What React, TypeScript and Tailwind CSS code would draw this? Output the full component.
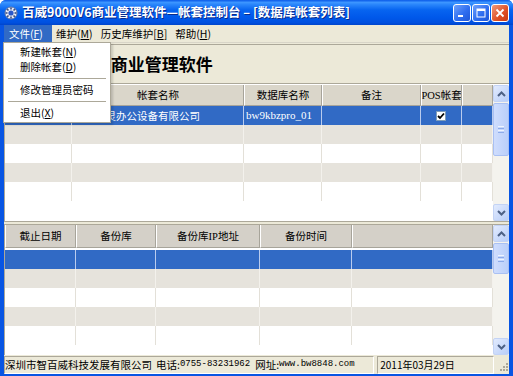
import React from "react";

const CJK = "font-['Noto_Sans_CJK_SC',sans-serif]";

function Chevron({ up }: { up?: boolean }) {
  return (
    <svg width="9" height="6" viewBox="0 0 9 6">
      <path d={up ? "M1 5 L4.5 1.5 L8 5" : "M1 1 L4.5 4.5 L8 1"} stroke="#4D6185" strokeWidth="2" fill="none" />
    </svg>
  );
}

function SBtn({ up }: { up?: boolean }) {
  return (
    <div className="h-[17px] flex items-center justify-center rounded-[2px] border border-[#C3D3F5] bg-[linear-gradient(135deg,#E2EBFE,#B9CEF8)]">
      <Chevron up={up} />
    </div>
  );
}

function Scrollbar({ thumb }: { thumb: string }) {
  return (
    <div className="w-[16px] flex flex-col bg-[#F4F3EE]">
      <SBtn up />
      <div className={`mt-[1px] ${thumb} rounded-[2px] border border-[#A9C0F3] bg-[linear-gradient(90deg,#CFDDFD,#BACFFA)] flex flex-col items-center justify-center gap-[1px]`}>
        <div className="w-[6px] h-[1px] bg-[#EEF4FE]" />
        <div className="w-[6px] h-[1px] bg-[#8CABEA]" />
        <div className="w-[6px] h-[1px] bg-[#EEF4FE]" />
        <div className="w-[6px] h-[1px] bg-[#8CABEA]" />
      </div>
      <div className="flex-1" />
      <SBtn />
    </div>
  );
}

function Check() {
  return (
    <div className="w-[10px] h-[10px] bg-white border border-[#7F9DB9] flex items-center justify-center">
      <svg width="8" height="8" viewBox="0 0 8 8">
        <path d="M1 4 L3 6 L7 1.5" stroke="#000" strokeWidth="1.8" fill="none" />
      </svg>
    </div>
  );
}

type Kind = "sel" | "gray" | "white";

function Row({ kind, widths, cells }: { kind: Kind; widths: string[]; cells?: React.ReactNode[] }) {
  const bg = kind === "sel" ? "bg-[#316AC5] text-white" : kind === "gray" ? "bg-[#E6E3DC]" : "bg-white";
  const line = kind === "sel" ? "border-[#B9CBEE]" : kind === "gray" ? "border-[#F3F1EC]" : "border-[#E3E0D8]";
  return (
    <div className={`flex h-[19px] shrink-0 ${bg}`}>
      {widths.map((w, i) => (
        <div key={i} className={`${w} h-full border-r ${line} flex items-center px-[2px] overflow-hidden whitespace-nowrap`}>
          {cells ? cells[i] : null}
        </div>
      ))}
    </div>
  );
}

function Header({ widths, labels, h, bg }: { widths: string[]; labels: React.ReactNode[]; h: string; bg: string }) {
  return (
    <div className={`flex ${h} shrink-0 ${bg}`}>
      {widths.map((w, i) => (
        <div
          key={i}
          className={`${w} h-full border-l border-l-white border-r border-r-[#A7A49A] border-b border-b-[#A7A49A] flex items-center justify-center whitespace-nowrap overflow-hidden`}
        >
          {labels[i]}
        </div>
      ))}
    </div>
  );
}

function U({ c }: { c: string }) {
  return <span className="underline underline-offset-1">{c}</span>;
}

function WinIcon() {
  return (
    <svg width="14" height="14" viewBox="0 0 14 14">
      <circle cx="7" cy="7" r="6" fill="#E8ECF6" stroke="#6C7FA8" strokeWidth="1" />
      <g stroke="#3A4F86" strokeWidth="1.6">
        <line x1="7" y1="1.5" x2="7" y2="3.5" />
        <line x1="7" y1="10.5" x2="7" y2="12.5" />
        <line x1="1.5" y1="7" x2="3.5" y2="7" />
        <line x1="10.5" y1="7" x2="12.5" y2="7" />
        <line x1="3.1" y1="3.1" x2="4.5" y2="4.5" />
        <line x1="9.5" y1="9.5" x2="10.9" y2="10.9" />
        <line x1="10.9" y1="3.1" x2="9.5" y2="4.5" />
        <line x1="3.1" y1="10.9" x2="4.5" y2="9.5" />
      </g>
      <circle cx="7" cy="7" r="2.6" fill="#2B58C8" />
    </svg>
  );
}

function TitleBtn({ kind }: { kind: "min" | "max" | "close" }) {
  const bg =
    kind === "close"
      ? "bg-[linear-gradient(135deg,#F09A7C,#DE4F24_60%,#C83A12)]"
      : "bg-[linear-gradient(135deg,#6FA1FB,#2F6EF0_55%,#1E56D8)]";
  return (
    <div className={`w-[18px] h-[18px] rounded-[3px] border border-white ${bg} flex items-center justify-center`}>
      {kind === "min" && (
        <svg width="12" height="12" viewBox="0 0 12 12">
          <rect x="2" y="8" width="5" height="2" fill="white" />
        </svg>
      )}
      {kind === "max" && (
        <svg width="12" height="12" viewBox="0 0 12 12">
          <rect x="2" y="2" width="8" height="8" fill="none" stroke="white" strokeWidth="1" />
          <rect x="2" y="2" width="8" height="2" fill="white" />
        </svg>
      )}
      {kind === "close" && (
        <svg width="12" height="12" viewBox="0 0 12 12">
          <path d="M2.5 2.5 L9.5 9.5 M9.5 2.5 L2.5 9.5" stroke="white" strokeWidth="1.8" />
        </svg>
      )}
    </div>
  );
}

export default function App() {
  const w1 = ["w-[67px]", "w-[172px]", "w-[78px]", "w-[99px]", "w-[41px]", "flex-1"];
  const w2 = ["w-[71px]", "w-[80px]", "w-[104px]", "w-[92px]", "flex-1"];
  const serif = "font-['Liberation_Serif',serif]";
  const mono = "font-['Liberation_Mono',monospace] text-[9px]";

  return (
    <div className={`w-[513px] h-[376px] bg-white ${CJK} text-[10.5px] text-black relative overflow-hidden`}>
      <div className="w-full h-full flex flex-col rounded-t-[6px] bg-[#0855E3]">
        {/* Title bar */}
        <div className="h-[25px] shrink-0 flex items-center pl-[4px] pr-[4px] rounded-t-[6px] bg-[linear-gradient(180deg,#0A5AE8_0%,#3C95FF_10%,#2A86FB_18%,#0764F0_40%,#0058EA_70%,#0050E0_90%,#0045CC_100%)]">
          <WinIcon />
          <span className="ml-[4px] text-white font-bold text-[12.5px] whitespace-nowrap [text-shadow:1px_1px_0_#0A2A8A]">
            百威9000V6商业管理软件—帐套控制台 – [数据库帐套列表]
          </span>
          <div className="ml-auto flex gap-[1px] items-center">
            <TitleBtn kind="min" />
            <TitleBtn kind="max" />
            <TitleBtn kind="close" />
          </div>
        </div>

        {/* Client */}
        <div className="flex-1 mx-[4px] mb-[4px] flex flex-col bg-[#ECE9D8]">
          {/* Menu bar */}
          <div className="h-[17px] shrink-0 flex items-stretch whitespace-nowrap">
            <div className="pl-[5px] w-[48px] bg-[#316AC5] text-white flex items-center">
              文件(<U c="F" />)
            </div>
            <div className="px-[4px] flex items-center">
              维护(<U c="M" />)
            </div>
            <div className="px-[4px] flex items-center">
              历史库维护[<U c="B" />]
            </div>
            <div className="px-[4px] flex items-center">
              帮助(<U c="H" />)
            </div>
          </div>
          <div className="h-[3px] shrink-0 border-t border-t-[#D8D5C8] border-b border-b-[#ACA899]" />

          {/* Big title */}
          <div className="h-[38px] shrink-0 flex items-center pl-[12px]">
            <span className="font-bold text-[17px]">百威9000V6商业管理软件</span>
          </div>
          <div className="h-[2px] shrink-0 border-t border-t-[#ACA899] border-b border-b-[#FFFFFF]" />

          {/* Table 1 */}
          <div className="h-[136px] shrink-0 flex bg-white border-l border-l-[#ACA899]">
            <div className="flex-1 flex flex-col overflow-hidden">
              <Header
                widths={w1}
                h="h-[21px]"
                bg="bg-[#DAD6CA]"
                labels={["", "帐套名称", "数据库名称", "备注", <span><span className={serif}>POS</span>帐套</span>, ""]}
              />
              <Row
                kind="sel"
                widths={w1}
                cells={[
                  "",
                  "深圳百灵办公设备有限公司",
                  <span className={`${serif} text-[11px]`}>bw9kbzpro_01</span>,
                  "",
                  <div className="w-full flex justify-center"><Check /></div>,
                  "",
                ]}
              />
              <Row kind="gray" widths={w1} />
              <Row kind="white" widths={w1} />
              <Row kind="gray" widths={w1} />
              <Row kind="white" widths={w1} />
              <div className="flex-1 bg-white" />
            </div>
            <Scrollbar thumb="h-[53px]" />
          </div>

          {/* Splitter */}
          <div className="h-[4px] shrink-0 border-t border-t-[#ACA899] border-b border-b-[#ACA899] bg-[#ECE9D8]" />

          {/* Table 2 */}
          <div className="h-[130px] shrink-0 flex bg-white border-l border-l-[#ACA899]">
            <div className="flex-1 flex flex-col overflow-hidden">
              <Header widths={w2} h="h-[23px]" bg="bg-[#D4D0C8]" labels={["截止日期", "备份库", <span>备份库<span className={serif}>IP</span>地址</span>, "备份时间", ""]} />
              <div className="h-[2px] shrink-0 bg-white" />
              <Row kind="sel" widths={w2} />
              <Row kind="gray" widths={w2} />
              <Row kind="white" widths={w2} />
              <Row kind="gray" widths={w2} />
              <Row kind="white" widths={w2} />
              <div className="flex-1 bg-white" />
            </div>
            <Scrollbar thumb="h-[31px]" />
          </div>

          {/* Status bar */}
          <div className="flex-1 flex items-stretch gap-[3px] pt-[1px] text-[10.5px] whitespace-nowrap">
            <div className="w-[371px] flex items-center border-t border-t-[#ACA899] border-l border-l-[#ACA899] border-r border-r-white border-b border-b-white">
              深圳市智百威科技发展有限公司<span className="ml-[4px]">电话:</span>
              <span className={mono}>0755-83231962</span>
              <span className="ml-[5px]">网址:</span>
              <span className={mono}>www.bw8848.com</span>
            </div>
            <div className="w-[117px] pl-[2px] flex items-center text-[10px] border-t border-t-[#ACA899] border-l border-l-[#ACA899] border-r border-r-white border-b border-b-white">
              2011年03月29日
            </div>
            <div className="flex-1 flex items-end justify-end">
              <svg width="12" height="12" viewBox="0 0 12 12">
                <g fill="#ACA899">
                  <rect x="9" y="1" width="2" height="2" />
                  <rect x="6" y="4" width="2" height="2" />
                  <rect x="9" y="4" width="2" height="2" />
                  <rect x="3" y="7" width="2" height="2" />
                  <rect x="6" y="7" width="2" height="2" />
                  <rect x="9" y="7" width="2" height="2" />
                </g>
              </svg>
            </div>
          </div>
        </div>
      </div>

      {/* Dropdown menu */}
      <div className="absolute left-[3px] top-[42px] w-[108px] bg-white border border-[#ACA899] shadow-[2px_2px_2px_rgba(0,0,0,0.15)] pt-[1px] pb-[2px] flex flex-col">
        <div className="h-[15px] pl-[16px] flex items-center">新建帐套(<U c="N" />)</div>
        <div className="h-[15px] pl-[16px] flex items-center">删除帐套(<U c="D" />)</div>
        <div className="h-[8px] flex items-center px-[4px]"><div className="w-full h-[1px] bg-[#ACA899]" /></div>
        <div className="h-[15px] pl-[16px] flex items-center">修改管理员密码</div>
        <div className="h-[8px] flex items-center px-[4px]"><div className="w-full h-[1px] bg-[#ACA899]" /></div>
        <div className="h-[15px] pl-[16px] flex items-center">退出(<U c="X" />)</div>
      </div>
    </div>
  );
}
